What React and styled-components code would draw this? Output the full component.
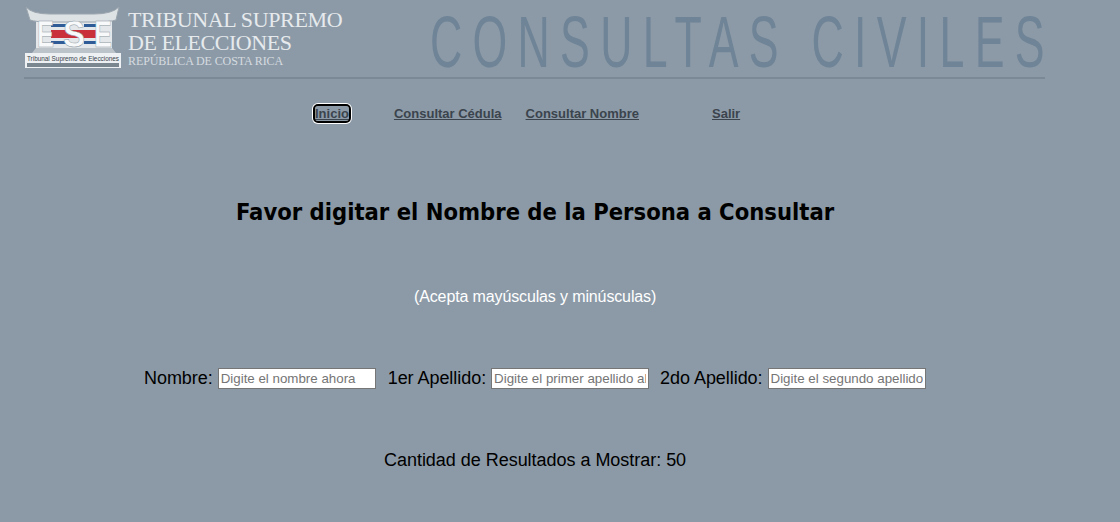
import React from "react";
import styled, { createGlobalStyle } from "styled-components";

const Global = createGlobalStyle`
  html, body { margin: 0; padding: 0; background: #8c9aa7; }
  body { font-family: "Liberation Sans", Arial, sans-serif; color: #000; overflow: hidden; }
`;
const Page = styled.div`
  width: 1120px;
  height: 522px;
  overflow: hidden;
  background: #8c9aa7;
  display: flex;
  flex-direction: column;
`;
const Header = styled.header`
  margin-left: 24px;
  width: 1021px;
  height: 77px;
  border-bottom: 2px solid #7b8997;
  display: flex;
  align-items: flex-start;
`;
const Logo = styled.svg`
  width: 100px;
  height: 69px;
  flex: none;
`;
const Brand = styled.div`
  margin-left: 4px;
  width: 302px;
  flex: none;
  font-family: "Liberation Serif", serif;
  color: #e6eaed;
  padding-top: 8px;
`;
const BrandLine = styled.div`
  font-size: ${p => p.$size}px;
  line-height: ${p => p.$line}px;
  letter-spacing: ${p => p.$track}px;
  white-space: nowrap;
  color: ${p => p.$color || "inherit"};
`;
const Banner = styled.div`
  flex: none;
  font-family: "Liberation Sans", sans-serif;
  font-size: 72px;
  line-height: 84px;
  color: #6f8497;
  white-space: nowrap;
  letter-spacing: 16.6px;
  transform: scaleX(0.62);
  transform-origin: left top;
`;
const Nav = styled.nav`
  display: flex;
  margin-top: 24px;
  height: 20px;
  padding-left: 315px;
  align-items: center;
  font-size: 13px;
  font-weight: 700;
`;
const NavLink = styled.a`
  color: #3b444d;
  text-decoration: underline;
  margin-right: ${p => p.$gap}px;
  white-space: nowrap;
  ${p => p.$focus && `
    outline: 2px solid #000;
    border-radius: 3px;
    box-shadow: 0 0 0 3px #fff;
  `}
`;
const Title = styled.h1`
  margin: 74px 0 0;
  padding-left: 236px;
  font-family: "DejaVu Sans", Verdana, sans-serif;
  font-stretch: condensed;
  font-size: 23.55px;
  line-height: 30px;
  font-weight: 700;
  white-space: nowrap;
`;
const Hint = styled.p`
  margin: 60px 0 0;
  padding-left: 414px;
  font-size: 16px;
  letter-spacing: -0.13px;
  line-height: 20px;
  color: #fff;
`;
const Form = styled.form`
  margin: 60px 0 0;
  padding-left: 144px;
  display: flex;
  align-items: center;
  height: 22px;
`;
const Label = styled.label`
  font-size: 18px;
  letter-spacing: -0.05px;
  line-height: 20px;
  white-space: nowrap;
`;
const Field = styled.input`
  box-sizing: border-box;
  width: 158px;
  height: 21px;
  margin: 1px ${p => p.$after}px 0 5px;
  padding: 1px 2px;
  border: 1px solid #767676;
  background: #fff;
  font-family: "Liberation Sans", sans-serif;
  font-size: 13.33px;
  &::placeholder { color: #757575; opacity: 1; }
`;
const Count = styled.p`
  margin: 61px 0 0;
  padding-left: 384px;
  font-size: 18px;
  letter-spacing: -0.03px;
  line-height: 20px;
`;

export default function App() {
  const letter = { fontFamily: "Liberation Sans", fontWeight: 700, fontSize: 37, lengthAdjust: "spacingAndGlyphs", fill: "#f8f9fa", stroke: "#8f9aa3", strokeWidth: 0.5 };
  return (
    <Page>
      <Global />
      <Header>
        <Logo viewBox="0 0 100 69" aria-hidden="true">
          <rect x="12" y="17" width="76" height="31" fill="#e4e8eb" />
          <path d="M2 7 Q8 14 26 14 H70 Q88 14 95 7 L92 20 Q86 22 70 22 H26 Q12 22 6 20 Z" fill="#dde2e5" stroke="#9aa5ae" strokeWidth="1" />
          <rect x="27" y="24" width="16" height="3" fill="#2f5c96" />
          <rect x="60" y="24" width="13" height="3" fill="#2f5c96" />
          <rect x="27" y="41" width="16" height="3" fill="#2f5c96" />
          <rect x="60" y="41" width="13" height="3" fill="#2f5c96" />
          <rect x="27" y="30" width="46" height="8" fill="#c9303a" />
          <text x="13" y="47" textLength="17" {...letter}>E</text>
          <text x="39" y="47" textLength="22" {...letter}>S</text>
          <text x="70" y="47" textLength="18" {...letter}>E</text>
          <path d="M12 48 H88 L92 53 H8 Z" fill="#bcc4ca" />
          <rect x="1" y="53" width="96" height="15" fill="#eef1f3" />
          <text x="49" y="60.5" textAnchor="middle" fontFamily="Liberation Sans" fontSize="6.4" fill="#39424a">Tribunal Supremo de Elecciones</text>
          <rect x="3" y="63" width="92" height="4" fill="#7a8791" />
        </Logo>
        <Brand>
          <BrandLine $size={22} $line={23} $track={-0.35}>TRIBUNAL SUPREMO</BrandLine>
          <BrandLine $size={22} $line={23} $track={-0.45}>DE ELECCIONES</BrandLine>
          <BrandLine $size={12} $line={14} $track={-0.1} $color="#d5dbe0">REPÚBLICA DE COSTA RICA</BrandLine>
        </Brand>
        <Banner>CONSULTAS CIVILES</Banner>
      </Header>
      <Nav>
        <NavLink href="#" $focus $gap={45}>Inicio</NavLink>
        <NavLink href="#" $gap={24}>Consultar Cédula</NavLink>
        <NavLink href="#" $gap={73}>Consultar Nombre</NavLink>
        <NavLink href="#" $gap={0}>Salir</NavLink>
      </Nav>
      <Title>Favor digitar el Nombre de la Persona a Consultar</Title>
      <Hint>(Acepta mayúsculas y minúsculas)</Hint>
      <Form>
        <Label>Nombre:</Label>
        <Field $after={12} placeholder="Digite el nombre ahora" />
        <Label>1er Apellido:</Label>
        <Field $after={11} placeholder="Digite el primer apellido ahora" />
        <Label>2do Apellido:</Label>
        <Field $after={0} placeholder="Digite el segundo apellido ahora" />
      </Form>
      <Count>Cantidad de Resultados a Mostrar: 50</Count>
    </Page>
  );
}
